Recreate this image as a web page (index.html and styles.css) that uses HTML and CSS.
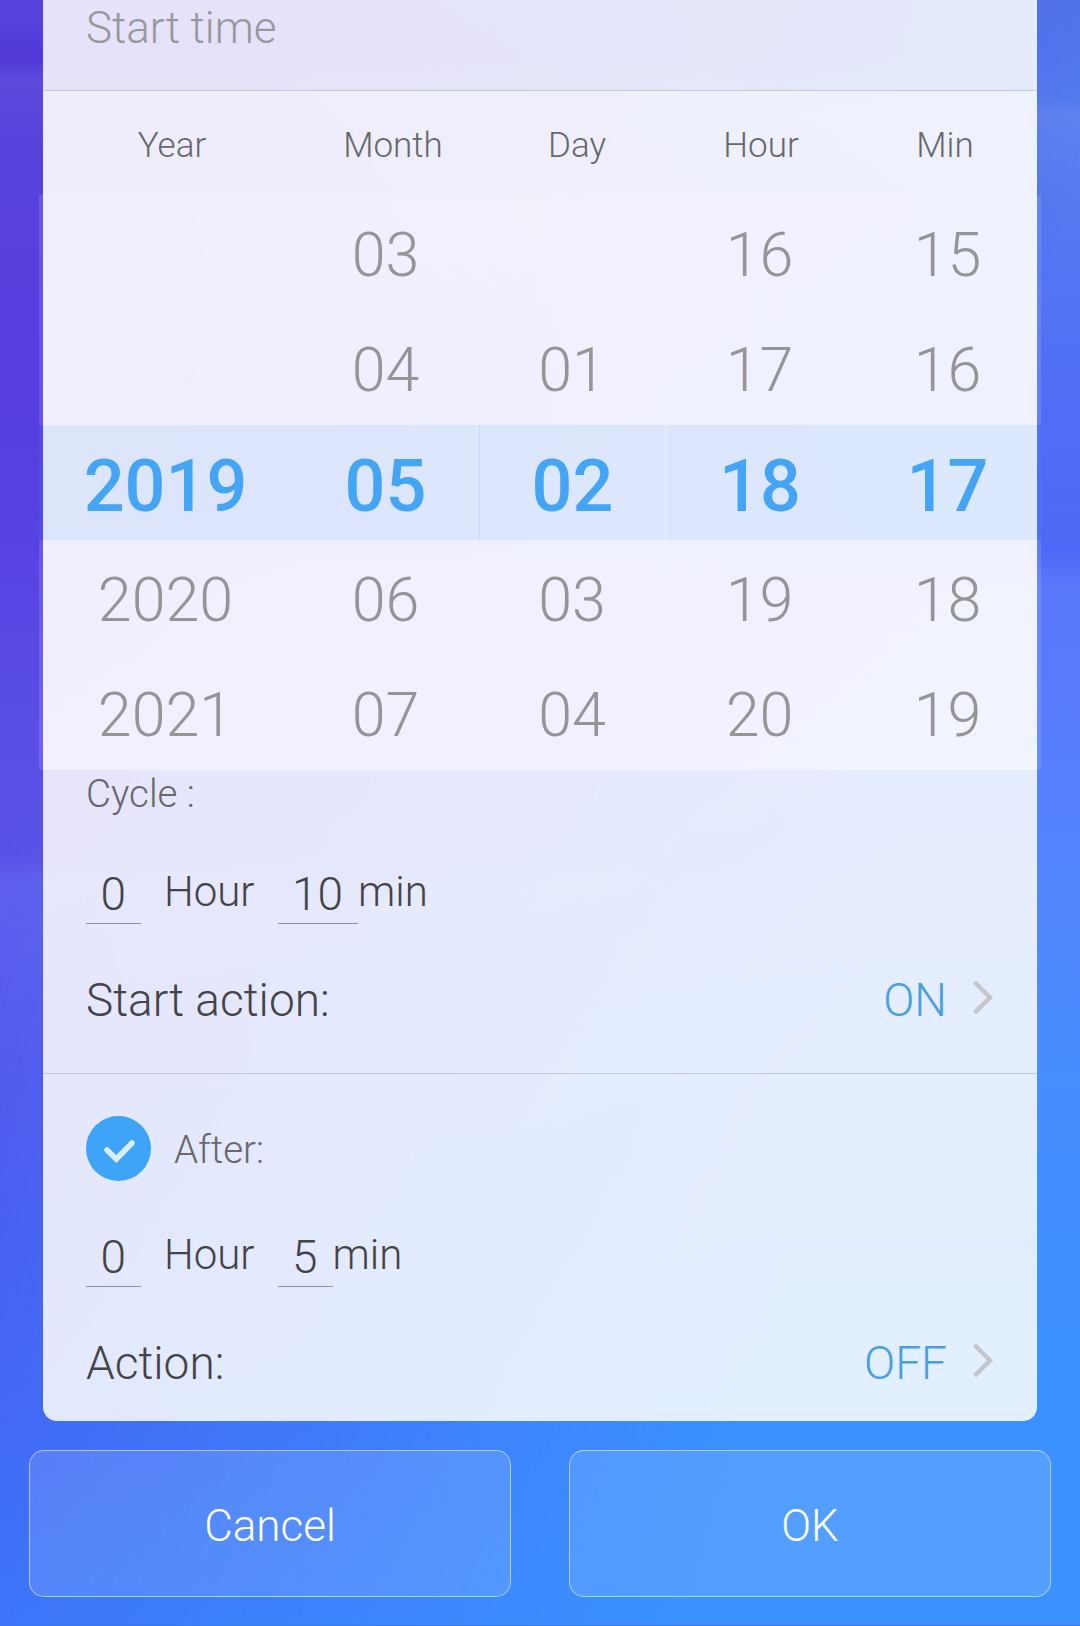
FILE: index.html
```
<!DOCTYPE html>
<html lang="en">
<head>
  <meta charset="UTF-8">
  <title>Start time</title>
  <link rel="stylesheet" href="styles.css">
</head>
<body>

  <div class="card">
    <div class="title">Start time</div>

    <div class="time">
      <div class="heads">
        <span>Year</span>
        <span>Month</span>
        <span>Day</span>
        <span>Hour</span>
        <span>Min</span>
      </div>

      <div class="picker">
        <div class="row"><span></span><span>03</span><span></span><span>16</span><span>15</span></div>
        <div class="row"><span></span><span>04</span><span>01</span><span>17</span><span>16</span></div>
        <div class="row selected"><span>2019</span><span>05</span><span>02</span><span>18</span><span>17</span></div>
        <div class="row"><span>2020</span><span>06</span><span>03</span><span>19</span><span>18</span></div>
        <div class="row"><span>2021</span><span>07</span><span>04</span><span>20</span><span>19</span></div>
      </div>
    </div>

    <div class="cycle">Cycle :</div>
    <div class="fields">
      <span class="field">0</span>
      <span class="unit hour">Hour</span>
      <span class="field">10</span>
      <span class="unit">min</span>
    </div>
    <div class="action">
      <span>Start action:</span>
      <span class="value">ON</span>
      <svg class="arrow" width="22" height="36" viewBox="0 0 22 36"><path d="M2.5 3 L18 18.5 L2.5 34" /></svg>
    </div>

    <div class="after">
      <svg class="check" width="65" height="65" viewBox="0 0 65 65">
        <circle cx="32.5" cy="32.5" r="32.5" />
        <path d="M21 34 L30.3 43 L46 27" />
      </svg>
      <span>After:</span>
    </div>
    <div class="fields">
      <span class="field">0</span>
      <span class="unit hour">Hour</span>
      <span class="field">5</span>
      <span class="unit">min</span>
    </div>
    <div class="action last">
      <span>Action:</span>
      <span class="value">OFF</span>
      <svg class="arrow" width="22" height="36" viewBox="0 0 22 36"><path d="M2.5 3 L18 18.5 L2.5 34" /></svg>
    </div>
  </div>

  <div class="buttons">
    <button class="button">Cancel</button>
    <button class="button">OK</button>
  </div>

</body>
</html>
```

FILE: styles.css
```
* {
  box-sizing: border-box;
}
body {
  margin: 0;
  height: 1626px;
  overflow: hidden;
  position: relative;
  font-family: Roboto, "Liberation Sans", sans-serif;
  font-weight: 300;
  color: #434348;
  border-bottom: 1px solid #3a78dc;
  background: linear-gradient(#5275ea 0, #527bf0 98px, #6084f0 114px, #5579f0 200px, #526ff5 380px, #5068f7 550px, #5a77fa 585px, #587dfb 720px, #5287fe 900px, #478eff 1080px, #3b92ff 1400px);
}
/* purple side of the background */
body::before {
  content: "";
  position: absolute;
  inset: 0;
  z-index: -1;
  background: linear-gradient(#5744dd 0, #5139d8 60px, #5d4bdc 80px, #5843dc 130px, #563dde 320px, #5640e2 500px, #5a4ee6 720px, #5a50e7 858px, #5e5eec 880px, #5457ec 1060px, #4a5af0 1220px, #4560f3 1420px, #3d6ef9 1626px);
  -webkit-mask-image: linear-gradient(105deg, #000 15%, transparent 74%);
  mask-image: linear-gradient(105deg, #000 15%, transparent 74%);
}
.card {
  width: 994px;
  height: 1421px;
  margin: 0 auto;
  background: rgba(255, 255, 255, 0.85);
  border-radius: 0 0 14px 14px;
}
.title {
  height: 91px;
  padding-left: 43px;
  line-height: 57px;
  font-size: 44px;
  color: #98989c;
  border-bottom: 1px solid #c6c8d0;
}
.time {
  background: rgba(255, 255, 255, 0.35);
}
.heads {
  display: grid;
  grid-template-columns: 258px repeat(4, 184px);
  height: 104px;
  line-height: 110px;
  font-size: 35px;
  text-align: center;
  color: #68686c;
}
.picker {
  margin: 0 -4px;
}
.row {
  display: grid;
  grid-template-columns: 253px 187px 186px 189px 187px;
  height: 115px;
  line-height: 120px;
  font-size: 61px;
  text-align: center;
  color: #959598;
  background: rgba(255, 255, 255, 0.12);
}
.selected {
  line-height: 124px;
  font-size: 72px;
  font-weight: 500;
  color: #44a5f4;
  background: rgba(68, 166, 245, 0.1);
}
.selected span {
  height: 115px;
}
.selected span:nth-child(3) {
  border-left: 1px solid rgba(68, 140, 245, 0.12);
}
.selected span:nth-child(4) {
  border-left: 1px solid rgba(255, 255, 255, 0.5);
}
.cycle {
  height: 97px;
  padding-left: 43px;
  line-height: 48px;
  font-size: 38.5px;
  color: #68686c;
}
.fields {
  display: flex;
  height: 57px;
  padding-left: 43px;
}
.field {
  height: 57px;
  padding: 0 15px 0 14.5px;
  line-height: 55px;
  font-size: 46px;
  border-bottom: 1px solid #909098;
}
.unit {
  line-height: 49px;
  font-size: 42px;
}
.hour {
  margin: 0 23px;
}
.action {
  display: flex;
  height: 150px;
  padding: 0 43px;
  line-height: 152px;
  font-size: 46px;
  border-bottom: 1px solid #c3c5d0;
}
.last {
  height: 134px;
  border-bottom: none;
}
.value {
  margin-left: auto;
  color: #4a9ee2;
}
.arrow {
  margin: 55px 0 0 25px;
  fill: none;
  stroke: #c6c6ca;
  stroke-width: 4.5;
}
.after {
  display: flex;
  gap: 23px;
  height: 156px;
  padding: 42px 0 0 43px;
  line-height: 68px;
  font-size: 38.5px;
  color: #68686c;
}
.check circle {
  fill: #3ea4f8;
}
.check path {
  fill: none;
  stroke: #dcebfd;
  stroke-width: 5.5;
  stroke-linecap: round;
}
.buttons {
  display: flex;
  gap: 58px;
  padding: 29px 29px 0;
}
.button {
  flex: 1;
  height: 147px;
  padding: 4px 0 0;
  font-family: inherit;
  font-size: 44px;
  font-weight: 300;
  color: #fff;
  background: rgba(255, 255, 255, 0.12);
  border: 1px solid rgba(214, 228, 236, 0.7);
  border-radius: 15px;
}
```
